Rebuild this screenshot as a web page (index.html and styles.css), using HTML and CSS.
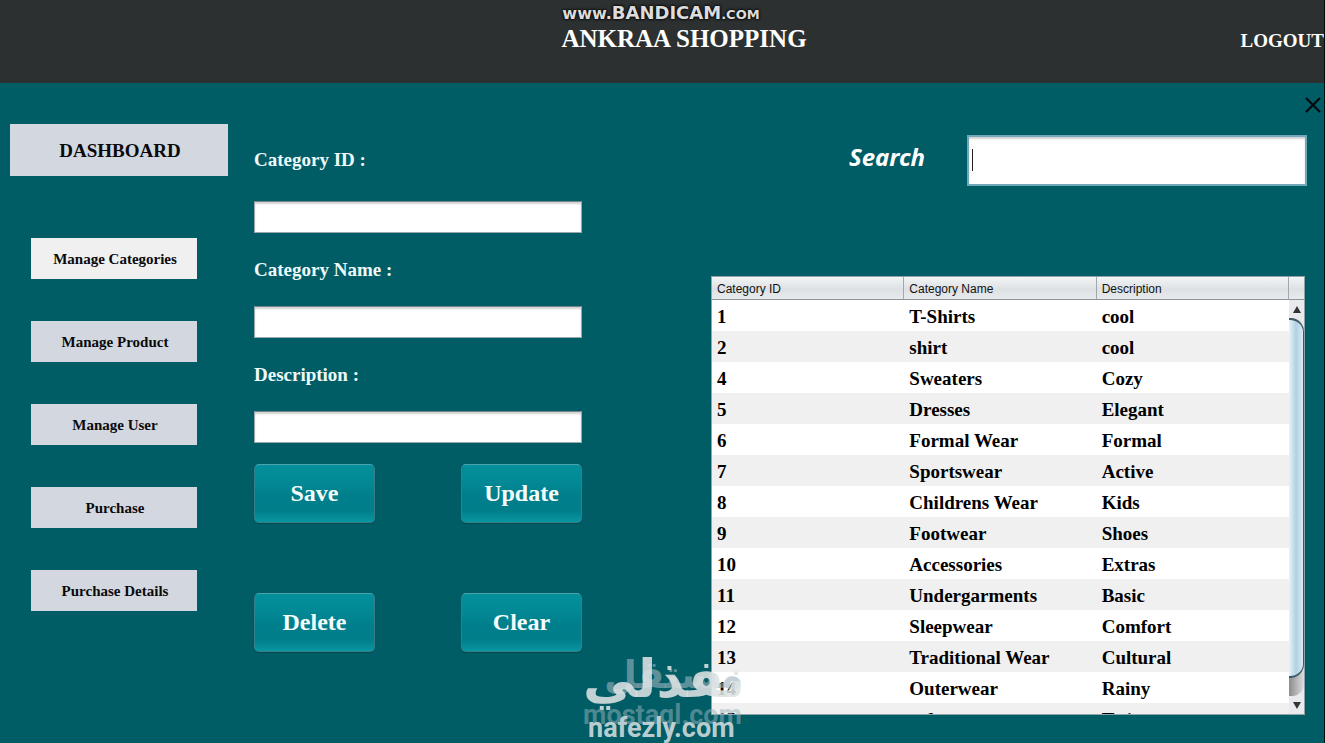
FILE: index.html
```html
<!DOCTYPE html>
<html lang="en">
<head>
<meta charset="utf-8">
<title>Ankraa Shopping</title>
<link rel="stylesheet" href="styles.css">
</head>
<body>
<header class="topbar">
  <p class="recorder"><small>www.</small>BANDICAM<small class="tld">.COM</small></p>
  <h1 class="brand">ANKRAA SHOPPING</h1>
  <button class="logout" type="button">LOGOUT</button>
</header>
<main class="screen">
  <div class="window-bar">
    <button class="close" type="button" aria-label="Close">
      <svg viewBox="0 0 16 16" width="16" height="16"><path d="M1 1L15 15M15 1L1 15" stroke="#04090b" stroke-width="2.2" fill="none"/></svg>
    </button>
  </div>
  <div class="columns">
    <nav class="sidebar">
      <button class="dashboard" type="button">DASHBOARD</button>
      <div class="menu">
        <button class="menu-item active" type="button">Manage Categories</button>
        <button class="menu-item" type="button">Manage Product</button>
        <button class="menu-item" type="button">Manage User</button>
        <button class="menu-item" type="button">Purchase</button>
        <button class="menu-item" type="button">Purchase Details</button>
      </div>
    </nav>
    <form class="category-form">
      <div class="fields">
        <div class="field lead"><label for="cid">Category ID :</label><input id="cid" type="text"></div>
        <div class="field"><label for="cname">Category Name :</label><input id="cname" type="text"></div>
        <div class="field"><label for="cdesc">Description :</label><input id="cdesc" type="text"></div>
      </div>
      <div class="actions">
        <button class="action" type="button">Save</button>
        <button class="action" type="button">Update</button>
        <button class="action" type="button">Delete</button>
        <button class="action" type="button">Clear</button>
      </div>
    </form>
    <section class="listing">
      <div class="search">
        <label for="search">Search</label>
        <div class="search-box"><input id="search" type="text"><span class="caret"></span></div>
      </div>
      <div class="grid">
        <div class="viewport">
          <table>
            <thead><tr><th>Category ID</th><th>Category Name</th><th>Description</th></tr></thead>
            <tbody>
              <tr><td>1</td><td>T-Shirts</td><td>cool</td></tr>
              <tr><td>2</td><td>shirt</td><td>cool</td></tr>
              <tr><td>4</td><td>Sweaters</td><td>Cozy</td></tr>
              <tr><td>5</td><td>Dresses</td><td>Elegant</td></tr>
              <tr><td>6</td><td>Formal Wear</td><td>Formal</td></tr>
              <tr><td>7</td><td>Sportswear</td><td>Active</td></tr>
              <tr><td>8</td><td>Childrens Wear</td><td>Kids</td></tr>
              <tr><td>9</td><td>Footwear</td><td>Shoes</td></tr>
              <tr><td>10</td><td>Accessories</td><td>Extras</td></tr>
              <tr><td>11</td><td>Undergarments</td><td>Basic</td></tr>
              <tr><td>12</td><td>Sleepwear</td><td>Comfort</td></tr>
              <tr><td>13</td><td>Traditional Wear</td><td>Cultural</td></tr>
              <tr><td>14</td><td>Outerwear</td><td>Rainy</td></tr>
              <tr><td>15</td><td>safe</td><td>Twin</td></tr>
            </tbody>
          </table>
        </div>
        <div class="scrollbar">
          <span class="corner"></span>
          <span class="arrow up"></span>
          <span class="track"><span class="thumb"></span></span>
          <span class="arrow down"></span>
        </div>
      </div>
    </section>
  </div>
</main>
<div class="watermark">
  <span class="mark back-ar" lang="ar">مستقل</span>
  <span class="mark front-ar" lang="ar">نفذلي</span>
  <span class="mark back-url">mostaql.com</span>
  <span class="mark front-url">nafezly.com</span>
</div>
</body>
</html>
```
FILE: styles.css
```css
* { box-sizing: border-box; }

body {
  margin: 0;
  height: 100vh;
  display: flex;
  flex-direction: column;
  position: relative;
  overflow: hidden;
  border-right: 1px solid #050a0b;
  background: #005c65;
  font-family: "Liberation Serif", serif;
  font-weight: bold;
}

button {
  font: inherit;
  border: 0;
  padding: 0;
}

.topbar {
  flex: none;
  height: 83px;
  padding-top: 4px;
  display: grid;
  grid-template-columns: 1fr auto 1fr;
  grid-template-rows: 20px 30px;
  align-items: center;
  background: #2c3031;
  color: #fff;
}

.recorder {
  grid-column: 1 / -1;
  margin: 0;
  padding-right: 2px;
  text-align: center;
  font: bold 18px/20px "DejaVu Sans", sans-serif;
  color: #dcdcdc;
  text-shadow: 0 0 3px #000, 0 0 3px #000;
}

.recorder small { font-size: 16px; }
.recorder .tld { font-size: 13px; }

.brand {
  grid-column: 2;
  margin: 0;
  padding-left: 44px;
  font-size: 25px;
  line-height: 30px;
}

.logout {
  grid-column: 3;
  justify-self: end;
  padding-top: 4px;
  background: none;
  color: #fff;
  font-size: 19px;
}

.screen {
  flex: 1;
  min-height: 0;
  display: flex;
  flex-direction: column;
  padding: 14px 3px 28px 10px;
}

.window-bar {
  flex: none;
  height: 27px;
  display: flex;
  justify-content: flex-end;
}

.close { background: none; height: 16px; line-height: 0; }

.columns {
  flex: 1;
  min-height: 0;
  display: flex;
}

.sidebar { width: 218px; }

.dashboard {
  width: 100%;
  height: 52px;
  padding: 2px 0 0 2px;
  background: #d3d8e0;
  color: #0a0a0c;
  font-size: 19px;
}

.menu {
  margin: 62px 31px 0 21px;
  display: grid;
  gap: 42px;
}

.menu-item {
  height: 41px;
  padding: 2px 0 0 2px;
  background: #d3d8e0;
  color: #0a0a0c;
  font-size: 15px;
}

.menu-item.active { background: #f0f0f0; }

.category-form {
  width: 328px;
  margin-left: 26px;
  padding-top: 24px;
  display: flex;
  flex-direction: column;
  gap: 21px;
}

.fields { display: grid; gap: 25px; }
.field { display: grid; gap: 24px; }
.field.lead { gap: 29px; }

.field label {
  font-size: 19px;
  line-height: 24px;
  color: #eefafa;
}

input {
  width: 100%;
  background: #fff;
  border: 1px solid #9aa9ad;
  border-top-color: #75868b;
  box-shadow: inset 0 2px 2px #d3d3d3;
  outline: 0;
}

.field input { height: 32px; }

.actions {
  display: grid;
  grid-template-columns: 121px 121px;
  justify-content: space-between;
  row-gap: 70px;
}

.action {
  height: 59px;
  border: 1px solid #377f88;
  border-top-color: #4aa3ad;
  border-radius: 5px;
  background: linear-gradient(#048f9c, #028995 30%, #007e8b 55%, #007e8a 80%, #0896a2);
  box-shadow: 0 1px 1px #034c53;
  color: #f4fdfd;
  font-size: 24px;
}

.listing {
  flex: 1;
  min-width: 0;
  margin-left: 129px;
  padding-top: 11px;
  display: flex;
  flex-direction: column;
}

.search {
  flex: none;
  display: flex;
  justify-content: flex-end;
  align-items: center;
  gap: 42px;
  padding-right: 14px;
}

.search label {
  padding-bottom: 8px;
  font: italic bold 24px/32px "Noto Sans", sans-serif;
  color: #fff;
}

.search-box { position: relative; width: 340px; }

.search-box input {
  display: block;
  height: 51px;
  border: 2px solid #72a7b7;
}

.caret {
  position: absolute;
  left: 5px;
  top: 14px;
  width: 1px;
  height: 22px;
  background: #222;
}

.grid {
  flex: 1;
  min-height: 0;
  margin: 90px 16px 0 0;
  display: flex;
  border: 1px solid #8fa3a8;
  background: #fff;
}

.viewport { flex: 1; min-width: 0; overflow: hidden; }

table {
  width: 100%;
  table-layout: fixed;
  border-collapse: separate;
  border-spacing: 0;
}

th {
  height: 23px;
  padding: 1px 5px 0;
  text-align: left;
  font: 12px/20px "Liberation Sans", sans-serif;
  color: #111;
  background: linear-gradient(#f3f5f6, #dde1e4 55%, #e8ebed);
  border-right: 1px solid #a0a8ad;
  border-bottom: 1px solid #8b959b;
}

td {
  height: 31px;
  padding: 2px 5px 0;
  font-size: 19px;
  line-height: 22px;
  color: #000;
}

tbody tr:nth-child(even) { background: #f0f0f0; }

.scrollbar {
  width: 15px;
  display: flex;
  flex-direction: column;
  background: #e8eaee;
}

.corner {
  height: 23px;
  background: linear-gradient(#f3f5f6, #dde1e4 55%, #e8ebed);
  border-bottom: 1px solid #8b959b;
}

.arrow {
  height: 18px;
  display: grid;
  place-items: center;
}

.arrow::before {
  content: "";
  border: 4px solid transparent;
}

.arrow.up::before { border-top: 0; border-bottom: 7px solid #333; }
.arrow.down::before { border-bottom: 0; border-top: 7px solid #333; }

.track {
  flex: 1;
  padding-bottom: 18px;
  display: flex;
  background: linear-gradient(90deg, #8c8c8e, #dcdde0);
  border-radius: 0 12px 12px 0;
}

.thumb {
  flex: 1;
  border: solid #3e5965;
  border-width: 2px 1px 2px 0;
  border-radius: 0 14px 14px 0;
  background: linear-gradient(90deg, #e6f3fa, #b0d1e2 50%, #d9ecf5);
}

.watermark {
  position: absolute;
  left: 583px;
  bottom: 0;
  width: 160px;
  height: 96px;
  pointer-events: none;
}

.mark {
  position: absolute;
  white-space: nowrap;
  font-family: "DejaVu Sans", sans-serif;
}

.back-ar { right: 0; top: 0; font-size: 38px; line-height: 56px; color: #9db4bd99; }
.front-ar { left: 0; top: 4px; font-size: 53px; line-height: 56px; color: #dde3e4e0; }
.back-url { left: 0; top: 52px; font: bold 27px/32px Roboto, sans-serif; color: #9db4bd80; }
.front-url { left: 5px; top: 66px; font: bold 27px/30px Roboto, sans-serif; color: #d3dddfe6; }
```
